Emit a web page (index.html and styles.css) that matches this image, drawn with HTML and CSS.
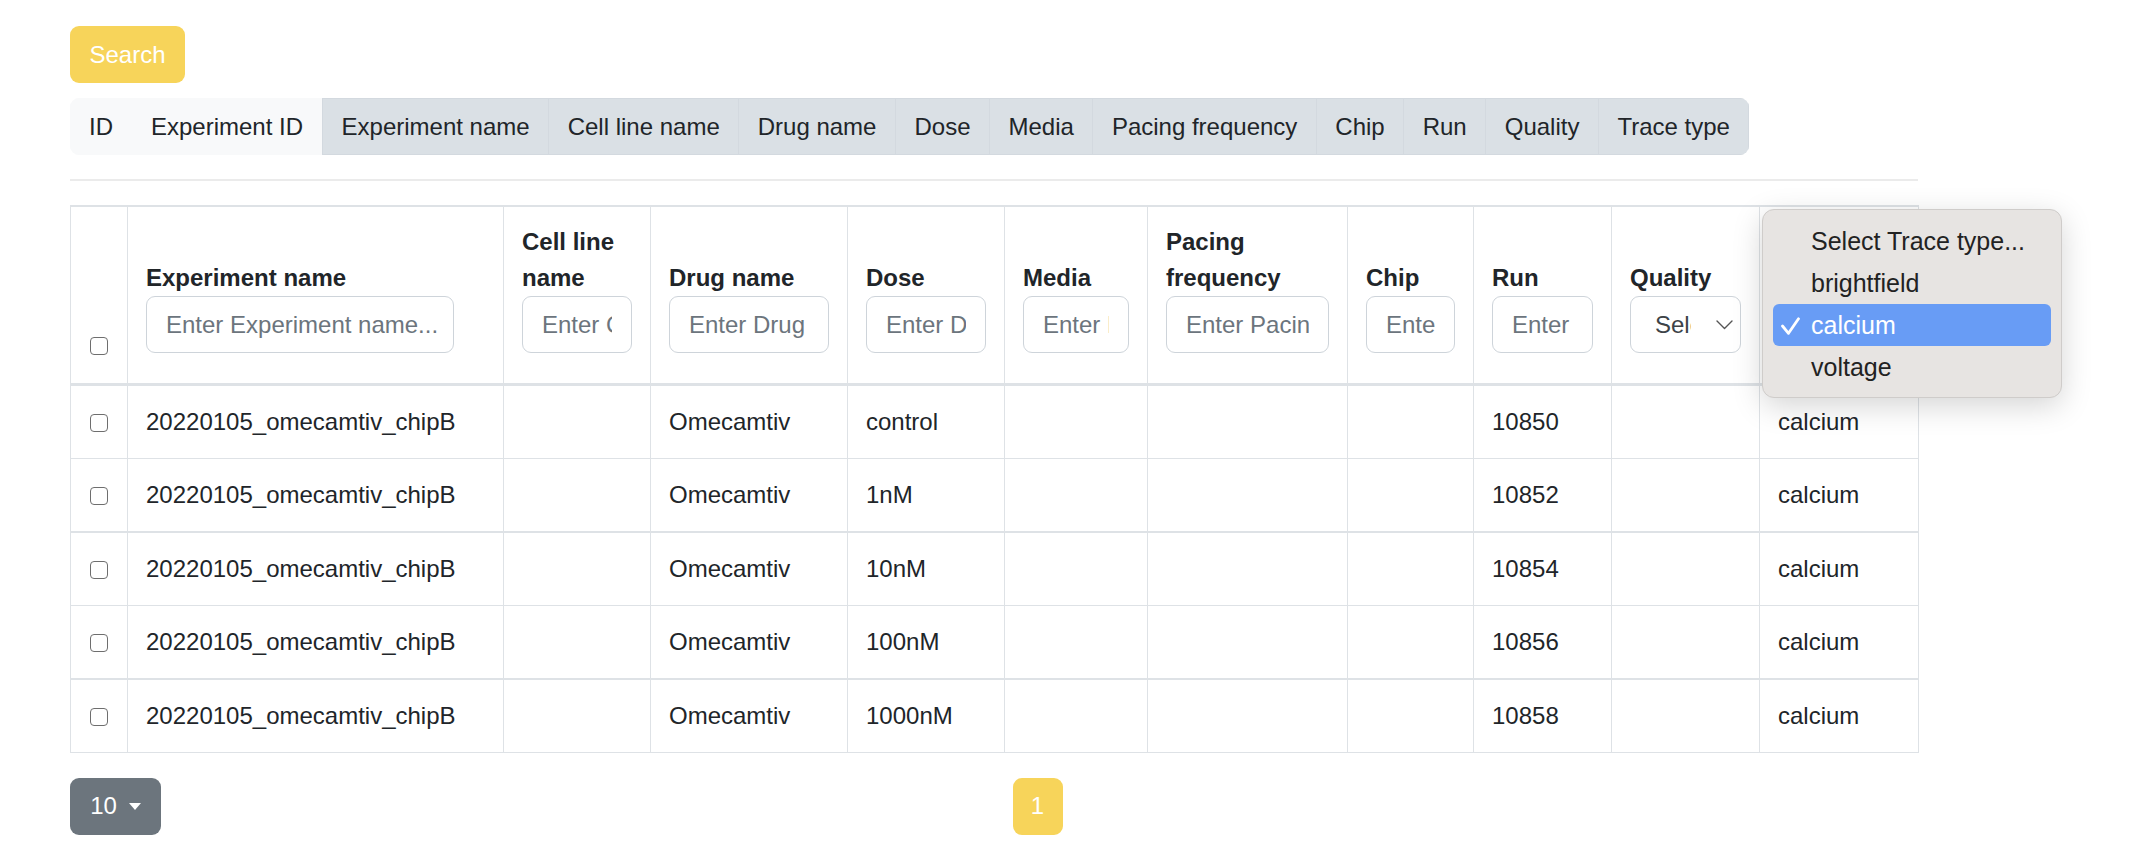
FILE: index.html
```html
<!DOCTYPE html>
<html lang="en">
<head>
<meta charset="utf-8">
<title>Experiments</title>
<link rel="stylesheet" href="styles.css">
</head>
<body>
<div class="page">
  <button class="btn btn-search" type="button">Search</button>

  <div class="tabs">
    <span class="tab">ID</span>
    <span class="tab">Experiment ID</span>
    <span class="tab tab-on">Experiment name</span>
    <span class="tab tab-on">Cell line name</span>
    <span class="tab tab-on">Drug name</span>
    <span class="tab tab-on">Dose</span>
    <span class="tab tab-on">Media</span>
    <span class="tab tab-on">Pacing frequency</span>
    <span class="tab tab-on">Chip</span>
    <span class="tab tab-on">Run</span>
    <span class="tab tab-on">Quality</span>
    <span class="tab tab-on">Trace type</span>
  </div>

  <div class="rule"></div>

  <table class="grid">
    <colgroup>
      <col class="w-chk">
      <col class="w-exp">
      <col class="w-cell">
      <col class="w-drug">
      <col class="w-dose">
      <col class="w-media">
      <col class="w-pace">
      <col class="w-chip">
      <col class="w-run">
      <col class="w-qual">
      <col class="w-trace">
    </colgroup>
    <thead>
      <tr>
        <th class="th-chk"><input class="chk" type="checkbox"></th>
        <th><div class="lbl">Experiment name</div><input class="fld fld-exp" type="text" placeholder="Enter Experiment name..."></th>
        <th><div class="lbl">Cell line name</div><input class="fld" type="text" placeholder="Enter Cell line name..."></th>
        <th><div class="lbl">Drug name</div><input class="fld" type="text" placeholder="Enter Drug name..."></th>
        <th><div class="lbl">Dose</div><input class="fld" type="text" placeholder="Enter Dose..."></th>
        <th><div class="lbl">Media</div><input class="fld" type="text" placeholder="Enter Media..."></th>
        <th><div class="lbl">Pacing frequency</div><input class="fld" type="text" placeholder="Enter Pacing frequency..."></th>
        <th><div class="lbl">Chip</div><input class="fld" type="text" placeholder="Enter Chip..."></th>
        <th><div class="lbl">Run</div><input class="fld" type="text" placeholder="Enter Run..."></th>
        <th><div class="lbl">Quality</div>
          <div class="sel"><span class="sel-text">Select Quality...</span>
            <svg class="chev" viewBox="0 0 17 10"><path d="M1 1 L8.5 8.5 L16 1" fill="none" stroke="#555" stroke-width="1.4" stroke-linecap="round" stroke-linejoin="round"/></svg>
          </div>
        </th>
        <th class="th-covered"><div class="lbl">Trace type</div>
          <div class="sel"><span class="sel-text">Select Trace type...</span>
            <svg class="chev" viewBox="0 0 17 10"><path d="M1 1 L8.5 8.5 L16 1" fill="none" stroke="#555" stroke-width="1.4" stroke-linecap="round" stroke-linejoin="round"/></svg>
          </div>
        </th>
      </tr>
    </thead>
    <tbody>
      <tr>
        <td class="td-chk"><input class="chk" type="checkbox"></td>
        <td>20220105_omecamtiv_chipB</td><td></td><td>Omecamtiv</td><td>control</td>
        <td></td><td></td><td></td><td>10850</td><td></td><td>calcium</td>
      </tr>
      <tr class="row-sep">
        <td class="td-chk"><input class="chk" type="checkbox"></td>
        <td>20220105_omecamtiv_chipB</td><td></td><td>Omecamtiv</td><td>1nM</td>
        <td></td><td></td><td></td><td>10852</td><td></td><td>calcium</td>
      </tr>
      <tr>
        <td class="td-chk"><input class="chk" type="checkbox"></td>
        <td>20220105_omecamtiv_chipB</td><td></td><td>Omecamtiv</td><td>10nM</td>
        <td></td><td></td><td></td><td>10854</td><td></td><td>calcium</td>
      </tr>
      <tr class="row-sep">
        <td class="td-chk"><input class="chk" type="checkbox"></td>
        <td>20220105_omecamtiv_chipB</td><td></td><td>Omecamtiv</td><td>100nM</td>
        <td></td><td></td><td></td><td>10856</td><td></td><td>calcium</td>
      </tr>
      <tr>
        <td class="td-chk"><input class="chk" type="checkbox"></td>
        <td>20220105_omecamtiv_chipB</td><td></td><td>Omecamtiv</td><td>1000nM</td>
        <td></td><td></td><td></td><td>10858</td><td></td><td>calcium</td>
      </tr>
    </tbody>
  </table>

  <div class="pager">
    <button class="btn btn-size" type="button">10<span class="caret"></span></button>
    <div class="pages"><button class="btn btn-page" type="button">1</button></div>
  </div>

  <div class="menu">
    <div class="menu-item">Select Trace type...</div>
    <div class="menu-item">brightfield</div>
    <div class="menu-item menu-item-on">
      <svg class="menu-check" viewBox="0 0 19 18"><path d="M1.5 9 L7.5 16.3 L17.5 1.8" fill="none" stroke="#fff" stroke-width="2.8" stroke-linecap="round" stroke-linejoin="round"/></svg>
      calcium
    </div>
    <div class="menu-item">voltage</div>
  </div>
</div>
</body>
</html>
```

FILE: styles.css
```css
* {
  box-sizing: border-box;
}

body {
  margin: 0;
  font-family: "Liberation Sans", Arial, sans-serif;
  font-size: 24px;
  color: #212529;
  background: #fff;
}

.page {
  position: relative;
  padding: 26px 0 0 70px;
}

.btn {
  font: inherit;
  border: 0;
  border-radius: 9px;
  height: 57px;
  color: #fff;
  display: inline-flex;
  align-items: center;
  justify-content: center;
  padding: 0;
}

.btn-search {
  width: 115px;
  background: #f7d45a;
}

.tabs {
  display: flex;
  width: max-content;
  margin-top: 15px;
  border-radius: 9px;
  overflow: hidden;
}

.tab {
  height: 57px;
  line-height: 55px;
  padding: 0 18px;
  border: 1px solid #f8f9fa;
  background: #f8f9fa;
  white-space: nowrap;
}

.tab-on {
  padding: 0 18.5px;
  background: #dae0e5;
  border-color: #d3d9df;
}

.tab-on + .tab-on {
  border-left: 0;
}

.rule {
  width: 1848px;
  height: 2px;
  margin: 24px 0 24px;
  background: #ebebeb;
}

.grid {
  width: 1848px;
  border-collapse: collapse;
  table-layout: fixed;
}

.w-chk { width: 57px; }
.w-exp { width: 376px; }
.w-cell { width: 147px; }
.w-drug { width: 197px; }
.w-dose { width: 157px; }
.w-media { width: 143px; }
.w-pace { width: 200px; }
.w-chip { width: 126px; }
.w-run { width: 138px; }
.w-qual { width: 148px; }
.w-trace { width: 159px; }

.grid th,
.grid td {
  border: 1px solid #dee2e6;
}

.grid th {
  border-top: 2px solid #dee2e6;
  border-bottom: 3px solid #dee2e6;
  padding: 17px 18px 30px;
  vertical-align: bottom;
  text-align: left;
  font-weight: bold;
}

.grid th.th-chk {
  padding: 0 0 25px;
  text-align: center;
}

.grid th.th-covered {
  color: transparent;
}

.lbl {
  line-height: 36px;
}

.grid td {
  height: 73.5px;
  padding: 0 18px;
  line-height: 36px;
  vertical-align: middle;
  white-space: nowrap;
}

.grid .row-sep td {
  border-bottom-width: 2px;
}

.grid td.td-chk {
  padding: 0;
  text-align: center;
}

.chk {
  -webkit-appearance: none;
  appearance: none;
  display: inline-block;
  width: 18px;
  height: 18px;
  margin: 0;
  border: 1.5px solid #6e6e6e;
  border-radius: 4px;
  background: #fff;
  vertical-align: middle;
}

.fld {
  display: block;
  width: 100%;
  height: 57px;
  margin: 0;
  padding: 0 19px;
  border: 1px solid #ced4da;
  border-radius: 9px;
  font: inherit;
  font-weight: normal;
  color: #495057;
  background: #fff;
  outline: none;
}

.fld-exp {
  width: 308px;
  padding-right: 10px;
}

.fld::placeholder {
  color: #6c757d;
  opacity: 1;
}

.sel {
  display: flex;
  align-items: center;
  height: 57px;
  padding: 0 7px 0 24px;
  border: 1px solid #ced4da;
  border-radius: 9px;
  background: #fff;
  font-weight: normal;
  color: #3d4348;
}

.sel-text {
  flex: 1;
  min-width: 0;
  overflow: hidden;
  white-space: nowrap;
}

.chev {
  flex: none;
  width: 17px;
  height: 10px;
  margin-left: 25px;
}

.pager {
  display: flex;
  width: 1848px;
  margin-top: 25px;
}

.btn-size {
  width: 91px;
  background: #6c757d;
}

.caret {
  display: inline-block;
  margin-left: 12px;
  width: 0;
  height: 0;
  border-top: 7px solid #fff;
  border-left: 6.5px solid transparent;
  border-right: 6.5px solid transparent;
}

.pages {
  flex: 1;
  display: flex;
  justify-content: center;
  padding-right: 4px;
}

.btn-page {
  width: 50px;
  background: #f7d45a;
}

.menu {
  position: absolute;
  left: 1762px;
  top: 209px;
  width: 300px;
  height: 189px;
  padding: 10px;
  background: #e7e4e2;
  border: 1px solid #cfccca;
  border-radius: 12px;
  box-shadow: 0 8px 30px rgba(0, 0, 0, 0.17);
  font-size: 25px;
  color: #222;
}

.menu-item {
  position: relative;
  height: 42px;
  display: flex;
  align-items: center;
  padding-left: 38px;
  border-radius: 6px;
  white-space: nowrap;
}

.menu-item-on {
  background: #689cf5;
  color: #fff;
}

.menu-check {
  position: absolute;
  left: 8px;
  top: 13px;
  width: 19px;
  height: 18px;
}
```
